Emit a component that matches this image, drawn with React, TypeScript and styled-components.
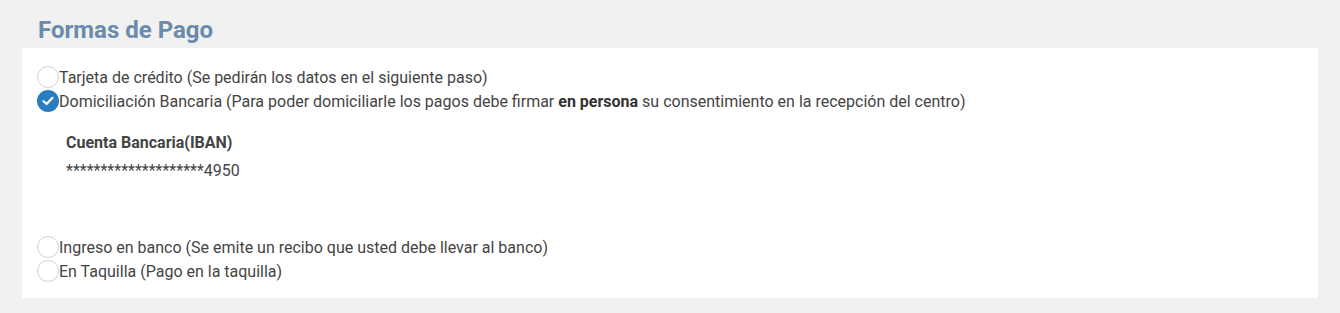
import React, { useState } from 'react'
import styled, { createGlobalStyle } from 'styled-components'

const GlobalStyle = createGlobalStyle`
    html, body {
        margin: 0;
        padding: 0;
        background: #f1f1f1;
    }
    body {
        font-family: Roboto, "Liberation Sans", Arial, sans-serif;
        color: #444;
    }
`

const Page = styled.div`
    padding: 16px 22px 15px 22px;
`

const Title = styled.h2`
    margin: 0 0 3px 16px;
    font-size: 24px;
    line-height: 29px;
    font-weight: 700;
    color: #6a8bab;
`

const Panel = styled.div`
    background: #fff;
    padding: 17px 15px 15px 15px;
`

const Option = styled.label`
    display: flex;
    align-items: center;
    height: 24px;
    font-size: 16px;
    color: #444;
    cursor: pointer;

    b {
        font-weight: 700;
        color: #333;
    }
`

const Circle = styled.span<{ $checked: boolean }>`
    flex: none;
    width: 22px;
    height: 22px;
    box-sizing: border-box;
    border-radius: 50%;
    border: ${p => (p.$checked ? 'none' : '1px solid #d4d4d4')};
    background: ${p => (p.$checked ? '#2a7cc0' : '#fff')};
    display: flex;
    align-items: center;
    justify-content: center;
`

const Details = styled.div`
    padding: 19px 0 53px 29px;
`

const FieldLabel = styled.div`
    font-size: 16px;
    font-weight: 700;
    color: #444;
    line-height: 22px;
`

const FieldValue = styled.div`
    font-size: 16px;
    color: #444;
    line-height: 22px;
    margin-top: 6px;
`

type Opt = { id: string; label: React.ReactNode }

const options: Opt[] = [
    { id: 'tarjeta', label: 'Tarjeta de crédito (Se pedirán los datos en el siguiente paso)' },
    {
        id: 'domiciliacion',
        label: (
            <>
                Domiciliación Bancaria (Para poder domiciliarle los pagos debe firmar <b>en persona</b> su
                consentimiento en la recepción del centro)
            </>
        ),
    },
    { id: 'ingreso', label: 'Ingreso en banco (Se emite un recibo que usted debe llevar al banco)' },
    { id: 'taquilla', label: 'En Taquilla (Pago en la taquilla)' },
]

const Check = () => (
    <svg width="12" height="10" viewBox="0 0 12 10">
        <path d="M1.5 5.2 L4.6 8 L10.5 1.8" fill="none" stroke="#fff" strokeWidth="2.2" strokeLinecap="round" strokeLinejoin="round" />
    </svg>
)

const Radio = ({ opt, checked, onSelect }: { opt: Opt; checked: boolean; onSelect(id: string): void }) => (
    <Option onClick={() => onSelect(opt.id)}>
        <Circle $checked={checked}>{checked && <Check />}</Circle>
        <span>{opt.label}</span>
    </Option>
)

export default function App() {
    const [selected, setSelected] = useState('domiciliacion')

    return (
        <>
            <GlobalStyle />
            <Page>
                <Title>Formas de Pago</Title>
                <Panel>
                    {options.slice(0, 2).map(o => (
                        <Radio key={o.id} opt={o} checked={selected === o.id} onSelect={setSelected} />
                    ))}
                    <Details>
                        <FieldLabel>Cuenta Bancaria(IBAN)</FieldLabel>
                        <FieldValue>********************4950</FieldValue>
                    </Details>
                    {options.slice(2).map(o => (
                        <Radio key={o.id} opt={o} checked={selected === o.id} onSelect={setSelected} />
                    ))}
                </Panel>
            </Page>
        </>
    )
}
